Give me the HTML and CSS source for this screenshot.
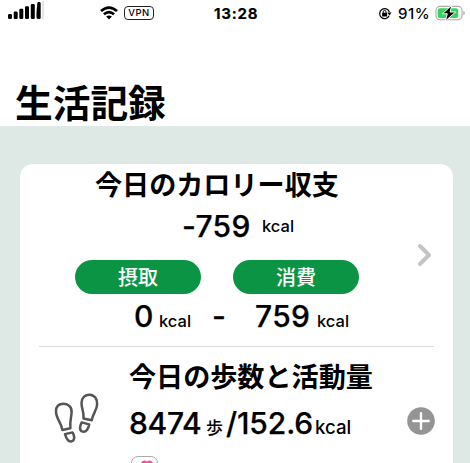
FILE: index.html
```
<!DOCTYPE html>
<html lang="ja">
<head>
<meta charset="utf-8">
<title>生活記録</title>
<link rel="stylesheet" href="styles.css">
</head>
<body>
<header class="header">
  <div class="status">
    <svg class="signal" width="38" height="20" viewBox="0 0 38 20">
      <rect x="0" y="14" width="4" height="5" rx="1.2"/><rect x="5.7" y="11.6" width="4" height="7.4" rx="1.2"/><rect x="11.3" y="8.8" width="4" height="10.2" rx="1.2"/><rect x="17" y="6.2" width="4" height="12.8" rx="1.2"/><rect x="22.8" y="4" width="4" height="15" rx="1.2"/><path d="M29.500 2.500c1-.8 3.200-.5 3.200.8V18c0 1-3 1.400-3.900.6-.7-2.500-.1-11 .7-16.100z"/><path class="signal-edge" d="M35 1v18"/>
    </svg>
    <svg class="wifi" width="20" height="16" viewBox="0 0 20 16">
      <path d="M2 6.1Q10-1 18 6.1M4.9 9.3q5.1-4.4 10.2 0"/><path class="solid" d="M7.1 11.6q2.9-2.2 5.8 0L10 14.5z"/>
    </svg>
    <span class="vpn">VPN</span>
    <span class="time">13:28</span>
    <svg class="lock" width="14" height="13" viewBox="0 0 14 13">
      <path d="M11.2 8.8A5 5 0 1 1 11.4 5"/><path class="solid" d="M9.3 5.4h4.3l-2.1 3z"/><rect class="solid" x="4.1" y="5.7" width="5" height="3.8" rx=".6"/><path class="shackle" d="M5.2 6V4.8a1.4 1.4 0 0 1 2.8 0V6"/>
    </svg>
    <span class="percent">91%</span>
    <svg class="battery" width="31" height="18" viewBox="0 0 31 18">
      <rect class="case" x="1" y="2.4" width="26" height="13.4" rx="4"/><rect class="charge" x="2.7" y="4.2" width="20.5" height="9.8" rx="2.3"/><path class="tip" d="M28.300 7c2 .5 2 3.700 0 4.200z"/><path class="bolt" d="M16.800 1.300 7.300 9.800h5L10.300 17l10.300-9h-5.500z"/>
    </svg>
  </div>
  <h1 class="page-title">生活記録</h1>
</header>
<main class="card">
  <section class="calories">
    <h2 class="title">今日のカロリー収支</h2>
    <div class="balance"><span class="num">-759</span><span class="unit">kcal</span></div>
    <div class="pills"><span class="pill">摂取</span><span class="pill">消費</span></div>
    <div class="totals"><span class="num intake">0</span><span class="unit intake-unit">kcal</span><span class="num minus">-</span><span class="num burned">759</span><span class="unit">kcal</span></div>
    <svg class="chevron" width="16" height="24" viewBox="0 0 16 24"><path d="m3 3 9 9-9 9"/></svg>
  </section>
  <section class="activity">
    <svg class="steps" width="46" height="52" viewBox="0 0 46 52">
      <path d="M8.400 37C7.100 29 2 25.500 2 18.500C2 13 5.500 10.800 9.600 10.800C14.500 10.800 18 14 17.600 19.500C17.300 24.500 15.700 28 16.400 35.200Z"/>
      <path d="M11 41.100L18.500 39.400C20.500 42.500 21.500 47.700 17.200 48.400C13.300 49 12 44.500 11 41.100Z"/>
      <path d="M29.500 25.500C30.300 18.500 27.400 16 27.500 10C27.700 4.500 31.500 1.500 35.600 1.700C40.500 1.900 43.500 6 43.100 11.500C42.700 18 38.800 20.500 37.700 27.300Z"/>
      <path d="M27.600 29.400L35.200 31.400C34.400 35 32.500 39.500 28.700 38.600C24.500 37.500 26.200 32.500 27.600 29.400Z"/>
    </svg>
    <div class="details">
      <h2 class="title">今日の歩数と活動量</h2>
      <div class="step-values"><span class="num count">8474</span><span class="step-unit">歩</span><span class="num burn">/152.6</span><span class="unit large">kcal</span></div>
      <div class="health"><svg width="14" height="13" viewBox="0 0 16 14"><path d="M8 13C-3 5 2 0 5 0q2 0 3 1.500 1-1.500 3-1.500c3 0 8 5-3 13z"/></svg></div>
    </div>
    <svg class="plus" width="28" height="28" viewBox="0 0 28 28"><circle cx="14" cy="14" r="13.800"/><path d="M14 6.300v15.400M6.300 14h15.400"/></svg>
  </section>
</main>
</body>
</html>
```
FILE: styles.css
```
* { box-sizing: border-box; }
body {
  margin: 0;
  height: 463px;
  overflow: hidden;
  background: #dee8e4;
  color: #000;
  font-family: Inter, "Noto Sans CJK JP", sans-serif;
}
svg { display: block; flex: none; fill: none; }
h1, h2 { margin: 0; white-space: nowrap; font-family: "Noto Sans CJK JP", sans-serif; font-weight: 700; }
.header { height: 126px; background: #fff; }
.status { display: flex; align-items: center; height: 26px; padding-left: 8px; }
.signal { fill: #000; margin-top: -6px; }
.signal-edge { stroke: #ccc; stroke-width: 1; }
.wifi { margin-left: 53px; stroke: #000; stroke-width: 2.7; }
.solid { fill: #000; stroke: none; }
.vpn {
  width: 30px; height: 14px; margin-left: 5px;
  border: 1.4px solid #222; border-radius: 4px;
  font-size: 9.5px; font-weight: 500; line-height: 12px; text-align: center; letter-spacing: .5px;
}
.time { width: 46px; margin-left: 60px; font-size: 15px; font-weight: 700; letter-spacing: .8px; white-space: nowrap; -webkit-text-stroke: .2px #000; }
.lock { margin-left: 118px; stroke: #000; stroke-width: 1.2; }
.shackle { stroke-width: 1; }
.percent { width: 34px; margin-left: 6px; font-size: 15px; font-weight: 500; letter-spacing: .5px; }
.battery { margin-left: 3px; margin-top: -1px; }
.case { stroke: #aaa; stroke-width: 1.1; }
.charge { fill: #35d45b; }
.tip { fill: #aaa; }
.bolt { fill: #000; stroke: #fff; stroke-width: 1; }
.page-title { padding: 52px 0 0 15px; font-size: 37.7px; line-height: 46px; }
.card { width: 433px; height: 299px; margin: 38px 0 0 20px; border-radius: 13px 13px 0 0; background: #fff; overflow: hidden; }
.calories { position: relative; height: 183px; margin: 0 19px; border-bottom: 1.5px solid #dcdcdc; }
.title { height: 40px; font-size: 27.1px; line-height: 40px; }
.calories .title { padding-left: 56px; line-height: 39px; }
.balance, .totals, .step-values { display: flex; align-items: baseline; height: 44px; line-height: 44px; white-space: nowrap; }
.num { font-size: 30px; font-weight: 500; letter-spacing: .3px; -webkit-text-stroke: .25px #000; }
.unit { font-size: 16.5px; font-weight: 500; }
.balance { align-items: center; padding-left: 143px; }
.balance .num { width: 80px; }
.pills { display: flex; gap: 32px; padding: 11.5px 0 0 36px; }
.pill {
  width: 126px; height: 34px; border-radius: 17px; background: #0b9444; color: #fff;
  font: 500 20px/34px "Noto Sans CJK JP", sans-serif; text-align: center;
}
.totals { padding-left: 95px; }
.intake { width: 25px; }
.intake-unit { width: 53px; }
.minus { width: 43px; }
.burned { width: 62px; }
.chevron { position: absolute; left: 378px; top: 79px; stroke: #c4c4c6; stroke-width: 4; stroke-linecap: round; stroke-linejoin: round; }
.activity { display: flex; }
.steps { margin: 46px 0 0 34px; stroke: #555; stroke-width: 2.5; stroke-linejoin: round; }
.details { width: 287px; padding-top: 9px; margin-left: 29px; }
.step-values { margin-top: 5px; }
.step-values .num { letter-spacing: -.3px; }
.count { width: 77px; }
.step-unit { width: 20px; font-size: 17px; font-weight: 500; }
.num.burn { width: 89px; letter-spacing: -.1px; }
.unit.large { font-size: 18.7px; }
.health { display: flex; width: 27px; height: 28px; margin: 11px 0 0 2px; padding: 3px 0 0 8px; border: 1.5px solid #aaa; border-radius: 7px; }
.health svg { fill: #ff4d9b; }
.plus { margin: 60px 0 0 -9px; fill: #949494; stroke: #fff; stroke-width: 2.4; stroke-linecap: round; }
.plus circle { stroke: none; }
```
